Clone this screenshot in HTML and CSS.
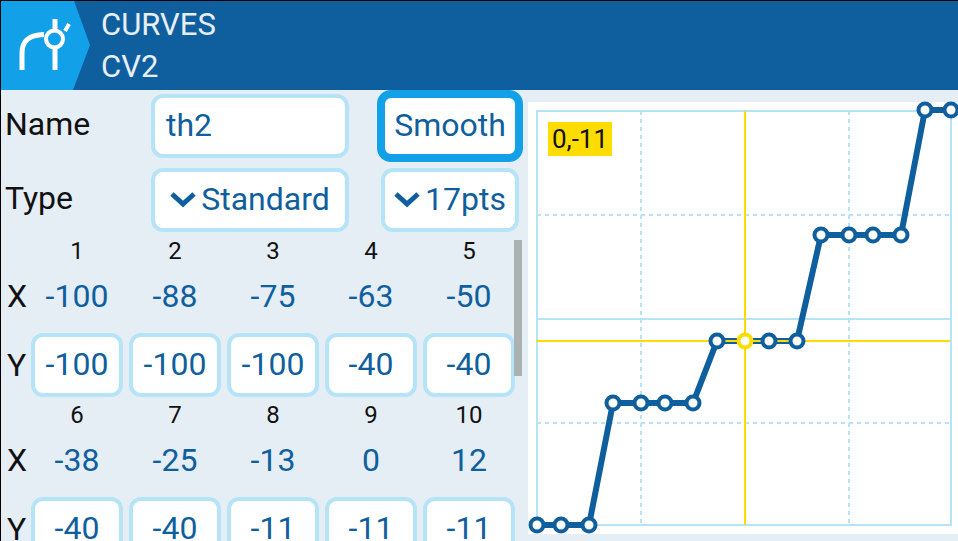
FILE: index.html
```html
<!DOCTYPE html>
<html lang="en">
<head>
  <meta charset="UTF-8" />
  <title>Curves CV2</title>
  <link rel="stylesheet" href="styles.css">
</head>
<body>
  <div class="screen">
    <header class="topbar">
      <div class="tab-icon">
        <svg width="90" height="89" viewBox="0 0 90 89">
          <path class="tab-shape" d="M0 0H73L89 44L72 89H0Z" />
          <path class="glyph" d="M21 69V52C21 40 28 34 43 33.500" />
          <circle class="glyph glyph-thin" cx="53.500" cy="38" r="8.500" />
          <path class="glyph" d="M54 18V30M54 47V69" />
          <path class="glyph glyph-thin" d="M64 30L68 23" />
        </svg>
      </div>
      <div class="titles">
        <div>CURVES</div>
        <div>CV2</div>
      </div>
    </header>

    <main class="content">
      <section class="editor">
        <div class="settings">
          <label>Name</label>
          <div class="field field-left">th2</div>
          <div class="field field-focus">Smooth</div>
          <label>Type</label>
          <div class="field">
            <svg class="chevron" width="26" height="16" viewBox="0 0 26 16"><path d="M2 3L13 13L24 3" /></svg>
            Standard
          </div>
          <div class="field">
            <svg class="chevron" width="26" height="16" viewBox="0 0 26 16"><path d="M2 3L13 13L24 3" /></svg>
            17pts
          </div>
        </div>

        <div class="points">
          <span></span><span class="num">1</span><span class="num">2</span><span class="num">3</span><span class="num">4</span><span class="num">5</span>
          <span class="axis">X</span><span class="val">-100</span><span class="val">-88</span><span class="val">-75</span><span class="val">-63</span><span class="val">-50</span>
          <span class="axis axis-y">Y</span><span class="cell">-100</span><span class="cell">-100</span><span class="cell">-100</span><span class="cell">-40</span><span class="cell">-40</span>
        </div>
        <div class="points">
          <span></span><span class="num">6</span><span class="num">7</span><span class="num">8</span><span class="num">9</span><span class="num">10</span>
          <span class="axis">X</span><span class="val">-38</span><span class="val">-25</span><span class="val">-13</span><span class="val">0</span><span class="val">12</span>
          <span class="axis axis-y">Y</span><span class="cell">-40</span><span class="cell">-40</span><span class="cell">-11</span><span class="cell">-11</span><span class="cell">-11</span>
        </div>

        <div class="scrollbar"></div>
      </section>

      <section class="chart">
        <svg width="430" height="432" viewBox="528 102 430 432">
          <rect class="grid" x="537" y="111" width="414" height="414" />
          <path class="grid" d="M537 319H951" />
          <path class="grid grid-dash" d="M641 111V525M849 111V525M537 215H951M537 423H951" />
          <polyline class="curve" points="537,525 561,525 589,525 613,403 641,403 665,403 693,403 717,341 745,341 769,341 797,341 821,235 849,235 873,235 901,235 925,110 951,110" />
          <path class="cross" d="M745 111V525M536 341H950" />
          <g class="dots">
            <circle cx="537" cy="525" r="6.500" /><circle cx="561" cy="525" r="6.500" /><circle cx="589" cy="525" r="6.500" />
            <circle cx="613" cy="403" r="6.500" /><circle cx="641" cy="403" r="6.500" /><circle cx="665" cy="403" r="6.500" /><circle cx="693" cy="403" r="6.500" />
            <circle cx="717" cy="341" r="6.500" /><circle class="dot-active" cx="745" cy="341" r="6.500" /><circle cx="769" cy="341" r="6.500" /><circle cx="797" cy="341" r="6.500" />
            <circle cx="821" cy="235" r="6.500" /><circle cx="849" cy="235" r="6.500" /><circle cx="873" cy="235" r="6.500" /><circle cx="901" cy="235" r="6.500" />
            <circle cx="925" cy="110" r="6.500" /><circle cx="951" cy="110" r="6.500" />
          </g>
        </svg>
        <div class="readout">0,-11</div>
      </section>
    </main>
  </div>
</body>
</html>
```

FILE: styles.css
```css
:root {
  --dark-blue: #0f5f9e;
  --bright-blue: #12a0e8;
  --pale-blue: #b5e3f8;
  --panel: #e5edf5;
  --yellow: #ffdc00;
}
* {
  box-sizing: border-box;
  margin: 0;
  padding: 0;
}
html, body {
  height: 100%;
  overflow: hidden;
}
body {
  font-family: Roboto, "Liberation Sans", sans-serif;
  background: var(--panel);
  color: #111;
}
.screen {
  height: 541px;
  overflow: hidden;
  border-top: 1px solid #000;
  border-left: 1px solid #000;
  background: var(--panel);
}

/* ───── Header ───── */
.topbar {
  height: 89px;
  display: flex;
  background: var(--dark-blue);
  color: #e8eef5;
}
.tab-icon {
  width: 100px;
  flex: none;
}
.tab-icon svg { display: block; }
.tab-shape { fill: var(--bright-blue); }
.glyph {
  fill: none;
  stroke: #fff;
  stroke-width: 5;
}
.glyph-thin { stroke-width: 4; }
.titles {
  font-size: 31px;
  line-height: 42px;
  padding-top: 3px;
}

/* ───── Left editor ───── */
.content { display: flex; }
.editor {
  position: relative;
  width: 527px;
  flex: none;
}
.settings {
  display: grid;
  grid-template-columns: 114px 198px 138px;
  grid-auto-rows: 64px;
  column-gap: 32px;
  row-gap: 10px;
  padding: 4px 0 1px 4px;
  align-items: center;
}
.settings label {
  font-size: 32px;
  margin-top: -4px;
}
.field {
  height: 64px;
  display: flex;
  align-items: center;
  justify-content: center;
  gap: 5px;
  padding-bottom: 2px;
  font-size: 32px;
  color: var(--dark-blue);
  background: #fff;
  border: 4px solid var(--pale-blue);
  border-radius: 12px;
}
.field-left {
  justify-content: flex-start;
  padding-left: 11px;
}
.field-focus {
  height: 72px;
  margin: -4px;
  border: 8px solid var(--bright-blue);
  border-radius: 14px;
}
.chevron { flex: none; }
.chevron path {
  fill: none;
  stroke: var(--dark-blue);
  stroke-width: 5;
}
.points {
  display: grid;
  grid-template-columns: 18px repeat(5, 92px);
  grid-template-rows: 36px 54px 74px;
  column-gap: 6px;
  padding-left: 6px;
  align-items: center;
  text-align: center;
}
.num { font-size: 24px; }
.axis {
  font-size: 32px;
  text-align: left;
}
.axis-y { margin-top: 10px; }
.val {
  font-size: 32px;
  color: var(--dark-blue);
}
.cell {
  height: 64px;
  margin-top: 10px;
  font-size: 32px;
  line-height: 55px;
  color: var(--dark-blue);
  background: #fff;
  border: 4px solid var(--pale-blue);
  border-radius: 12px;
}
.scrollbar {
  position: absolute;
  left: 513px;
  top: 150px;
  width: 8px;
  height: 136px;
  background: #aab2b2;
}

/* ───── Chart ───── */
.chart {
  position: relative;
  width: 430px;
  height: 432px;
  margin-top: 12px;
  background: #fff;
  flex: none;
}
.chart svg {
  display: block;
  overflow: visible;
}
.grid {
  fill: none;
  stroke: var(--pale-blue);
  stroke-width: 2;
}
.grid-dash { stroke-dasharray: 4 4; }
.curve {
  fill: none;
  stroke: var(--dark-blue);
  stroke-width: 6;
}
.cross {
  fill: none;
  stroke: var(--yellow);
  stroke-width: 2;
}
.dots circle {
  fill: #fff;
  stroke: var(--dark-blue);
  stroke-width: 4;
}
.dots .dot-active { stroke: var(--yellow); }
.readout {
  position: absolute;
  left: 20px;
  top: 20px;
  width: 64px;
  height: 34px;
  font-size: 26px;
  line-height: 34px;
  text-align: center;
  background: var(--yellow);
  color: #111;
}
```
